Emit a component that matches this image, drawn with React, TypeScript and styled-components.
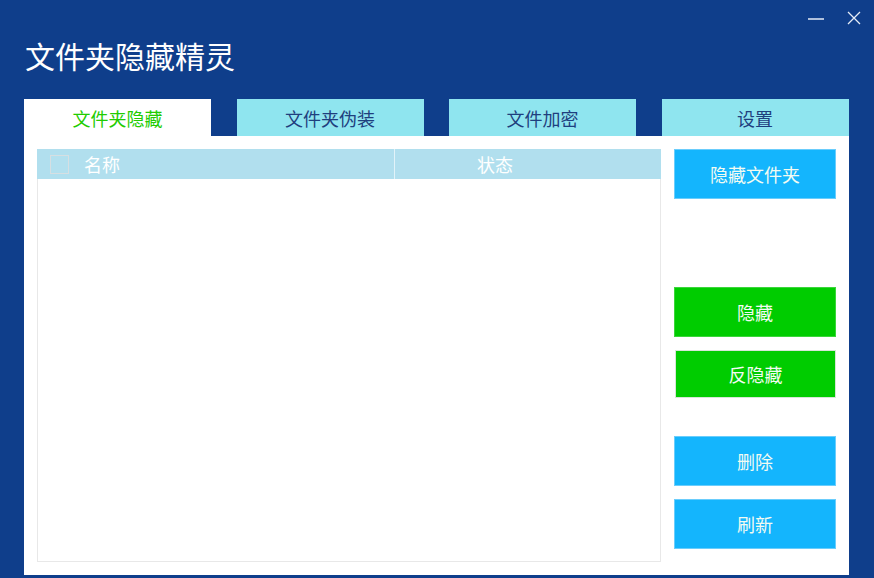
import styled, { createGlobalStyle } from "styled-components";

const GlobalStyle = createGlobalStyle`
  html, body {
    margin: 0;
    padding: 0;
    background: #0f3e8b;
  }
  body {
    font-family: "Noto Sans CJK SC", "Noto Sans", sans-serif;
  }
`;

const Window = styled.div`
  width: 874px;
  height: 578px;
  background: #0f3e8b;
  display: flex;
  flex-direction: column;
  padding: 0 25px 3px 24px;
  box-sizing: border-box;
  overflow: hidden;
`;

const Header = styled.div`
  height: 99px;
  display: flex;
  flex-direction: column;
`;

const Controls = styled.div`
  height: 36px;
  display: flex;
  justify-content: flex-end;
  align-items: center;
  gap: 22px;
  margin-right: -13px;
`;

const ControlButton = styled.div`
  width: 16px;
  height: 16px;
  display: flex;
  align-items: center;
  justify-content: center;
`;

const Title = styled.h1`
  margin: 4px 0 0 1px;
  font-size: 30px;
  line-height: 30px;
  font-weight: 400;
  color: #ffffff;
`;

const TabBar = styled.div`
  display: flex;
  gap: 25.5px;
  height: 37px;
`;

const Tab = styled.div<{ $active?: boolean }>`
  width: 187px;
  height: 37px;
  display: flex;
  align-items: center;
  justify-content: center;
  font-size: 18px;
  background: ${({ $active }) => ($active ? "#ffffff" : "#8fe5ef")};
  color: ${({ $active }) => ($active ? "#22cc00" : "#1f3f7e")};
`;

const Panel = styled.div`
  flex: 1;
  background: #ffffff;
  display: flex;
  gap: 13px;
  padding: 13px;
  box-sizing: border-box;
`;

const Table = styled.div`
  flex: 1;
  border: 1px solid #e8e8e8;
  border-top: none;
  display: flex;
  flex-direction: column;
`;

const TableHead = styled.div`
  height: 30px;
  background: #b1dfee;
  display: flex;
  margin: 0 -1px;
`;

const HeadCell = styled.div<{ $width?: number }>`
  display: flex;
  align-items: center;
  font-size: 18px;
  color: #ffffff;
  box-sizing: border-box;
  ${({ $width }) => ($width ? `width: ${$width}px;` : "flex: 1;")}
`;

const NameCell = styled(HeadCell)`
  padding-left: 13px;
  gap: 15px;
  border-right: 1px solid #e2f3f9;
`;

const StatusCell = styled(HeadCell)`
  padding-left: 82px;
`;

const Checkbox = styled.div`
  width: 19px;
  height: 19px;
  box-sizing: border-box;
  border: 1px solid #d6dfe2;
  background: #b3e0ee;
`;

const Side = styled.div`
  width: 162px;
  display: flex;
  flex-direction: column;
`;

const ActionButton = styled.button<{ $green?: boolean; $top?: number; $inset?: boolean }>`
  height: ${({ $inset }) => ($inset ? 48 : 50)}px;
  margin-top: ${({ $top }) => $top ?? 0}px;
  margin-left: ${({ $inset }) => ($inset ? 1 : 0)}px;
  width: ${({ $inset }) => ($inset ? 161 : 162)}px;
  font-family: inherit;
  font-size: 18px;
  color: #f2fbf2;
  background: ${({ $green }) => ($green ? "#00cc00" : "#14b5fd")};
  border: 1px solid ${({ $green, $inset }) =>
    $inset ? "#d7e6d7" : $green ? "#3ad63a" : "#6acdfc"};
  border-radius: 0;
  padding: 0;
  cursor: pointer;
`;

export default function App() {
  return (
    <>
      <GlobalStyle />
      <Window>
        <Header>
          <Controls>
            <ControlButton>
              <svg width="16" height="16" viewBox="0 0 16 16">
                <line x1="0" y1="9" x2="16" y2="9" stroke="#e6edf7" strokeWidth="1.5" />
              </svg>
            </ControlButton>
            <ControlButton>
              <svg width="14" height="14" viewBox="0 0 14 14">
                <path d="M1 1 L13 13 M13 1 L1 13" stroke="#e6edf7" strokeWidth="1.3" />
              </svg>
            </ControlButton>
          </Controls>
          <Title>文件夹隐藏精灵</Title>
        </Header>
        <TabBar>
          <Tab $active>文件夹隐藏</Tab>
          <Tab>文件夹伪装</Tab>
          <Tab>文件加密</Tab>
          <Tab>设置</Tab>
        </TabBar>
        <Panel>
          <Table>
            <TableHead>
              <NameCell $width={358}>
                <Checkbox />
                名称
              </NameCell>
              <StatusCell>状态</StatusCell>
            </TableHead>
          </Table>
          <Side>
            <ActionButton>隐藏文件夹</ActionButton>
            <ActionButton $green $top={88}>隐藏</ActionButton>
            <ActionButton $green $inset $top={13}>反隐藏</ActionButton>
            <ActionButton $top={38}>删除</ActionButton>
            <ActionButton $top={13}>刷新</ActionButton>
          </Side>
        </Panel>
      </Window>
    </>
  );
}
